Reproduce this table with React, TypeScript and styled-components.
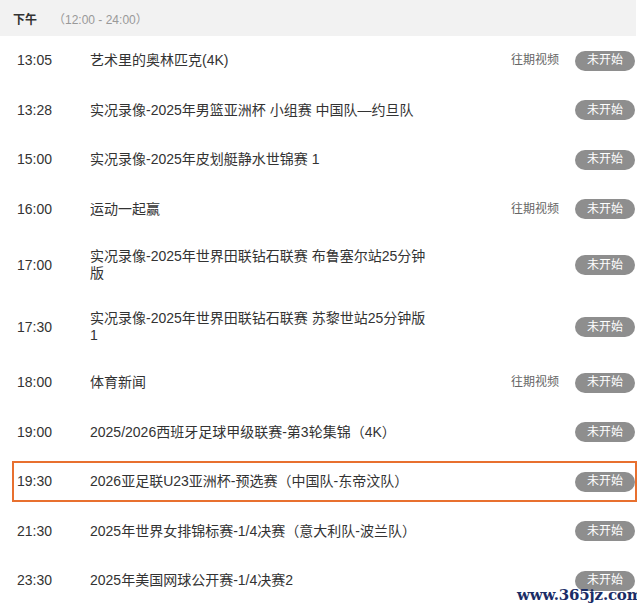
import React from "react";
import styled, { createGlobalStyle } from "styled-components";

const GlobalStyle = createGlobalStyle`
  html, body {
    margin: 0;
    padding: 0;
    background: #ffffff;
  }
  body {
    font-family: "Liberation Sans", Arial, "Noto Sans CJK SC", sans-serif;
    color: #333333;
  }
`;

const Page = styled.div`
  position: relative;
  width: 637px;
  height: 611px;
  overflow: hidden;
`;

const Header = styled.div`
  display: flex;
  align-items: center;
  width: 636px;
  height: 36px;
  background: #f2f2f2;
  padding-left: 13px;
  box-sizing: border-box;
  font-size: 12px;
`;

const Period = styled.span`
  font-weight: bold;
  color: #333333;
  width: 36px;
`;

const Range = styled.span`
  color: #999999;
  margin-left: 4px;
`;

const List = styled.div`
  display: flex;
  flex-direction: column;
`;

const Row = styled.div<{ $active?: boolean }>`
  display: flex;
  align-items: center;
  box-sizing: border-box;
  min-height: ${(p) => (p.$active ? "41px" : "49.5px")};
  padding: ${(p) => (p.$active ? "8px 0 8px 3px" : "14px 2px 14px 17px")};
  margin: ${(p) => (p.$active ? "4px 0 4.5px 12px" : "0")};
  border: ${(p) => (p.$active ? "2px solid #e8702f" : "none")};
  font-size: 14px;
  line-height: 17px;
`;

const Time = styled.div`
  flex: 0 0 73px;
  color: #333333;
`;

const Title = styled.div`
  flex: 0 0 338px;
  color: #333333;
`;

const Side = styled.div`
  margin-left: auto;
  display: flex;
  align-items: center;
  gap: 16px;
`;

const Replay = styled.span`
  font-size: 12px;
  color: #666666;
`;

const Badge = styled.span`
  display: inline-flex;
  align-items: center;
  justify-content: center;
  width: 60px;
  height: 20px;
  border-radius: 10px;
  background: #8e8e8e;
  color: #ffffff;
  font-size: 12px;
`;

const Watermark = styled.div`
  position: absolute;
  left: 517px;
  top: 586px;
  font-family: "DejaVu Serif", "Liberation Serif", serif;
  font-weight: bold;
  font-size: 15px;
  color: #1b2d66;
  letter-spacing: -0.2px;
`;

type Item = { time: string; title: string; replay?: boolean; active?: boolean };

const items: Item[] = [
  { time: "13:05", title: "艺术里的奥林匹克(4K)", replay: true },
  { time: "13:28", title: "实况录像-2025年男篮亚洲杯 小组赛 中国队—约旦队" },
  { time: "15:00", title: "实况录像-2025年皮划艇静水世锦赛 1" },
  { time: "16:00", title: "运动一起赢", replay: true },
  { time: "17:00", title: "实况录像-2025年世界田联钻石联赛 布鲁塞尔站25分钟版" },
  { time: "17:30", title: "实况录像-2025年世界田联钻石联赛 苏黎世站25分钟版1" },
  { time: "18:00", title: "体育新闻", replay: true },
  { time: "19:00", title: "2025/2026西班牙足球甲级联赛-第3轮集锦（4K）" },
  { time: "19:30", title: "2026亚足联U23亚洲杯-预选赛（中国队-东帝汶队）", active: true },
  { time: "21:30", title: "2025年世界女排锦标赛-1/4决赛（意大利队-波兰队）" },
  { time: "23:30", title: "2025年美国网球公开赛-1/4决赛2" },
];

export default function App() {
  return (
    <Page>
      <GlobalStyle />
      <Header>
        <Period>下午</Period>
        <Range>（12:00 - 24:00）</Range>
      </Header>
      <List>
        {items.map((it) => (
          <Row key={it.time} $active={it.active}>
            <Time>{it.time}</Time>
            <Title>{it.title}</Title>
            <Side>
              {it.replay && <Replay>往期视频</Replay>}
              <Badge>未开始</Badge>
            </Side>
          </Row>
        ))}
      </List>
      <Watermark>www.365jz.com</Watermark>
    </Page>
  );
}
